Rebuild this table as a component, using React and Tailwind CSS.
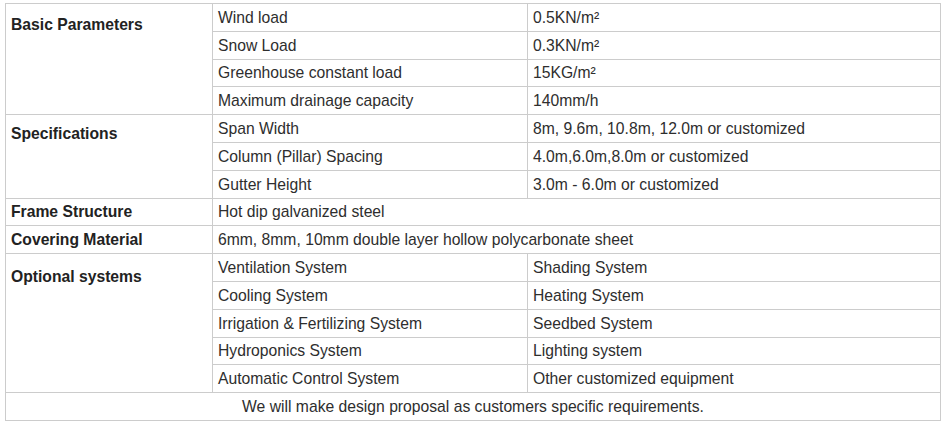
const basic = [
  ['Wind load', '0.5KN/m²'],
  ['Snow Load', '0.3KN/m²'],
  ['Greenhouse constant load', '15KG/m²'],
  ['Maximum drainage capacity', '140mm/h'],
];

const specs = [
  ['Span Width', '8m, 9.6m, 10.8m, 12.0m or customized'],
  ['Column (Pillar) Spacing', '4.0m,6.0m,8.0m or customized'],
  ['Gutter Height', '3.0m - 6.0m or customized'],
];

const optional = [
  ['Ventilation System', 'Shading System'],
  ['Cooling System', 'Heating System'],
  ['Irrigation & Fertilizing System', 'Seedbed System'],
  ['Hydroponics System', 'Lighting system'],
  ['Automatic Control System', 'Other customized equipment'],
];

const cell = 'border border-[#cccccc] px-[5px] h-[27.8px] py-0 align-middle';
const label = 'border border-[#cccccc] px-[5px] align-top font-bold text-[#222222]';

function Group({ title, rows, pt }) {
  return rows.map((r, i) => (
    <tr key={r[0]}>
      {i === 0 && (
        <td rowSpan={rows.length} className={`${label} ${pt}`}>
          {title}
        </td>
      )}
      <td className={cell}>{r[0]}</td>
      <td className={cell}>{r[1]}</td>
    </tr>
  ));
}

export default function App() {
  return (
    <div className="w-[945px] h-[427px] bg-white pt-[3px] pl-[5px] font-['Liberation_Sans',Arial,sans-serif] text-[15.7px] leading-[17px] text-[#2e2e2e]">
      <table className="w-[935px] border-collapse table-fixed">
        <colgroup>
          <col className="w-[207px]" />
          <col className="w-[315px]" />
          <col className="w-[413px]" />
        </colgroup>
        <tbody>
          <Group title="Basic Parameters" rows={basic} pt="pt-[12px]" />
          <Group title="Specifications" rows={specs} pt="pt-[10px]" />
          <tr>
            <td className={`${cell} font-bold text-[#222222]`}>Frame Structure</td>
            <td className={cell} colSpan={2}>Hot dip galvanized steel</td>
          </tr>
          <tr>
            <td className={`${cell} font-bold text-[#222222]`}>Covering Material</td>
            <td className={cell} colSpan={2}>6mm, 8mm, 10mm double layer hollow polycarbonate sheet</td>
          </tr>
          <Group title="Optional systems" rows={optional} pt="pt-[14px]" />
          <tr>
            <td className={`${cell} text-center`} colSpan={3}>
              We will make design proposal as customers specific requirements.
            </td>
          </tr>
        </tbody>
      </table>
    </div>
  );
}
